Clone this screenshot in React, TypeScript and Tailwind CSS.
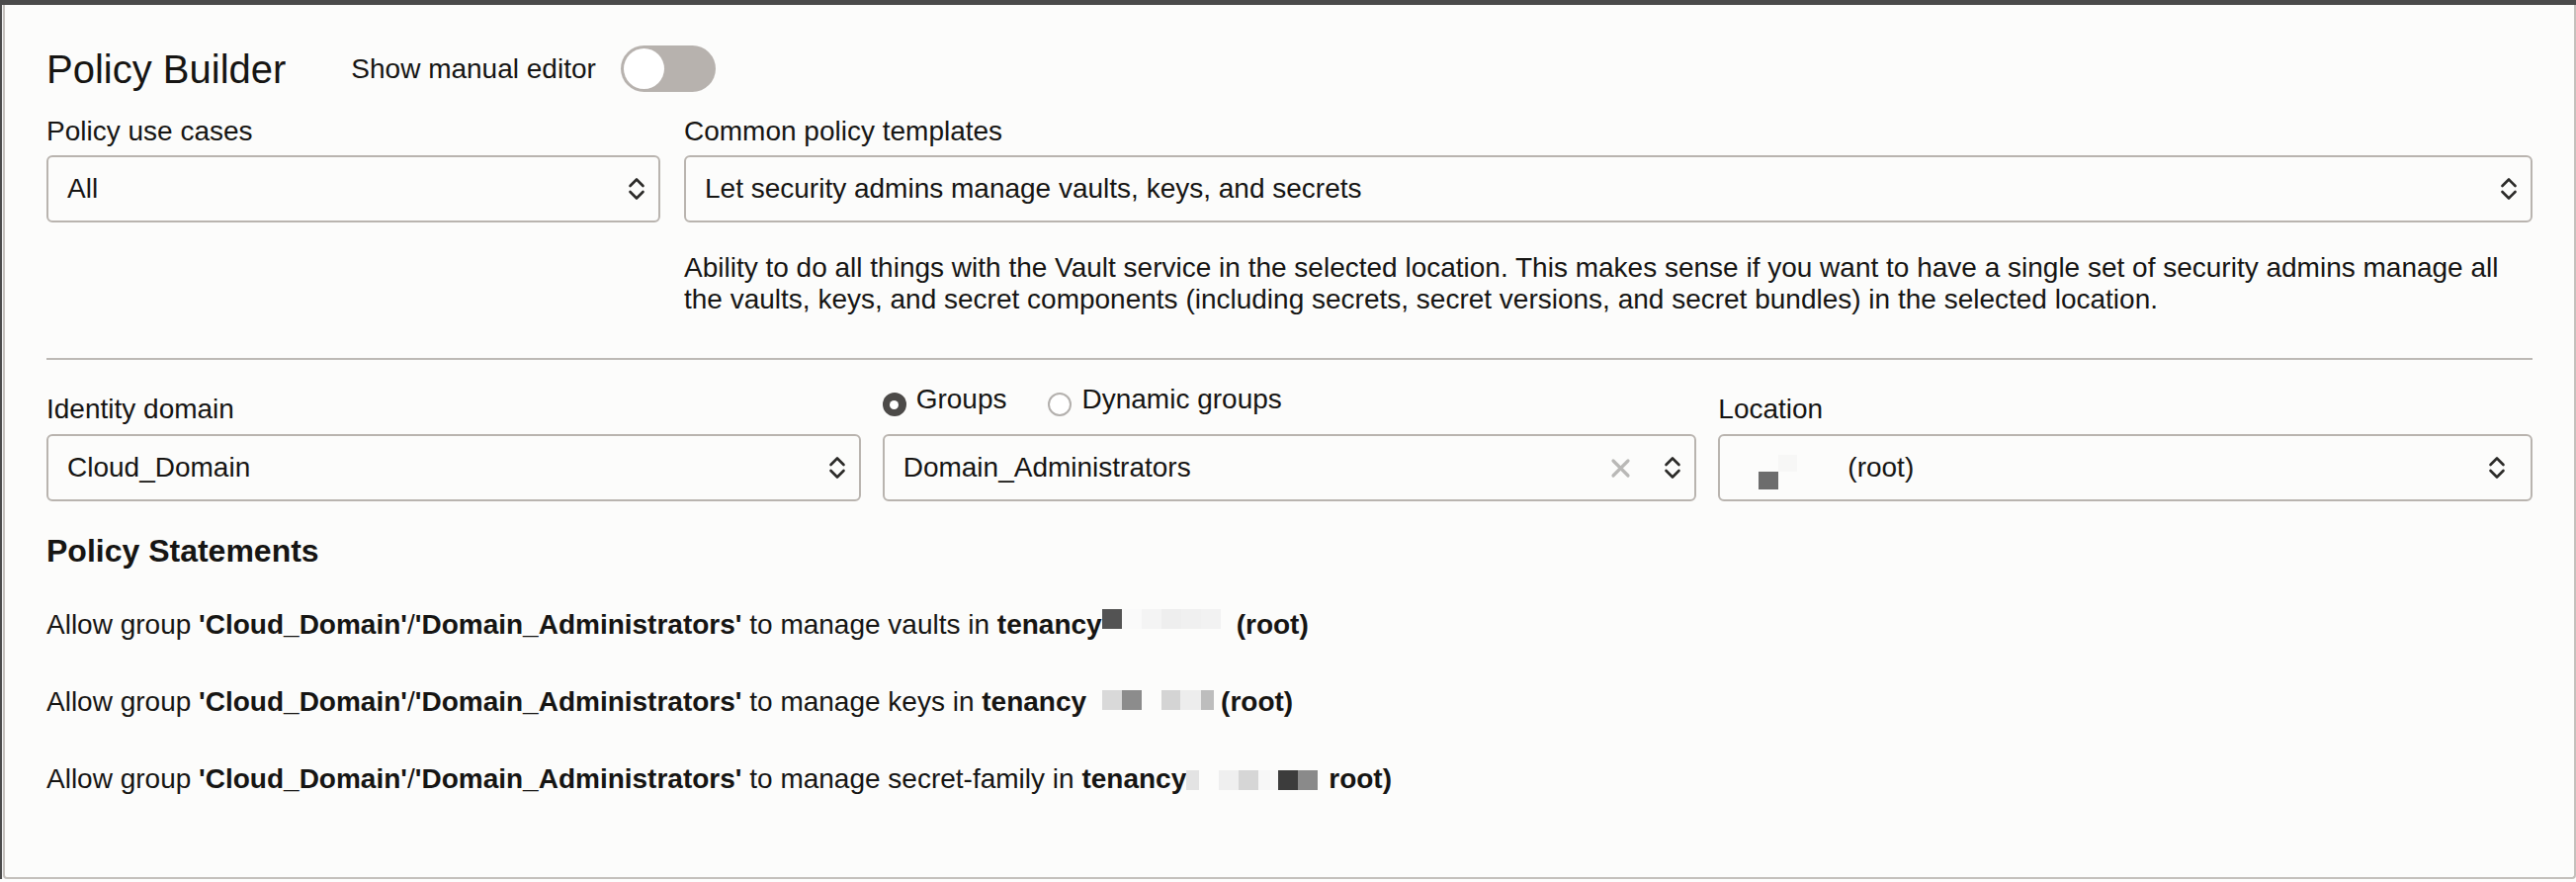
import React from 'react';

const TEXT = 'text-[28px] leading-[32px]';

function Chevrons(): JSX.Element {
  return (
    <svg width="18" height="28" viewBox="0 0 18 28" fill="none" className="shrink-0">
      <path d="M2.5 11 L9 4.5 L15.5 11" stroke="#2b2a28" strokeWidth="2.6" strokeLinecap="round" strokeLinejoin="round" />
      <path d="M2.5 17 L9 23.5 L15.5 17" stroke="#2b2a28" strokeWidth="2.6" strokeLinecap="round" strokeLinejoin="round" />
    </svg>
  );
}

function ClearIcon(): JSX.Element {
  return (
    <svg width="21" height="21" viewBox="0 0 21 21" fill="none" className="mr-[33px] shrink-0">
      <path d="M3 3 L18 18 M18 3 L3 18" stroke="#b9b8b6" strokeWidth="3.2" strokeLinecap="round" />
    </svg>
  );
}

function Select({
  children,
  clear,
  wide,
}: {
  children: React.ReactNode;
  clear?: boolean;
  wide?: boolean;
}): JSX.Element {
  return (
    <div
      className={
        wide
          ? 'flex h-[68px] items-center rounded-[6px] border-2 border-[#b9b4af] bg-[#fcfcfb] pl-[19px] pr-[25px]'
          : 'flex h-[68px] items-center rounded-[6px] border-2 border-[#b9b4af] bg-[#fcfcfb] pl-[19px] pr-[13px]'
      }
    >
      <div className={`flex flex-1 items-center ${TEXT}`}>{children}</div>
      {clear && <ClearIcon />}
      <Chevrons />
    </div>
  );
}

function Radio({ label, checked }: { label: string; checked?: boolean }): JSX.Element {
  return (
    <div className="flex items-start">
      {checked ? (
        <span className="mt-[9px] flex h-[24px] w-[24px] items-center justify-center rounded-full bg-[#4c4a48]">
          <span className="h-[9px] w-[9px] rounded-full bg-white" />
        </span>
      ) : (
        <span className="mt-[9px] h-[24px] w-[24px] rounded-full border-2 border-[#b3b0ad] bg-white" />
      )}
      <span className={`ml-[10px] ${TEXT}`}>{label}</span>
    </div>
  );
}

type Block = [string, string];

function Redact({ blocks, align }: { blocks: Block[]; align: string }): JSX.Element {
  return (
    <>
      {blocks.map(([w, c], i) => (
        <span key={i} className={`inline-block h-[20px] ${align} ${w} ${c}`} />
      ))}
    </>
  );
}

function Statement({
  what,
  blocks,
  align,
  root,
  rootGap,
}: {
  what: string;
  blocks: Block[];
  align: string;
  root: string;
  rootGap: string;
}): JSX.Element {
  return (
    <p className={`whitespace-nowrap ${TEXT}`}>
      Allow group <b>'Cloud_Domain'</b>/<b>'Domain_Administrators'</b> to manage {what} in{' '}
      <b>tenancy</b>
      <Redact blocks={blocks} align={align} />
      <b className={`inline-block ${rootGap}`}>{root}</b>
    </p>
  );
}

export default function App(): JSX.Element {
  return (
    <div className="flex h-[892px] w-[2606px] flex-col bg-[#fdfdfd] font-['Liberation_Sans',Arial,sans-serif] text-[#161513]">
      <div className="h-[5px] shrink-0 bg-[#4b4b4b]" />
      <div className="flex h-[884px] shrink-0">
        <div className="w-[2px] bg-[#4b4b4b]" />
        <div className="w-[1px] bg-[#f2f2f2]" />
        <div className="flex-1 rounded-b-[4px] border-x-2 border-b-2 border-[#c4c0bc] bg-[#fcfcfb] px-[42px] pt-[41px]">
          <header className="flex h-[47px] items-center">
            <h1 className="text-[40px] font-normal leading-[40px]">Policy Builder</h1>
            <span className={`ml-[66px] ${TEXT}`}>Show manual editor</span>
            <span className="ml-[25px] flex h-[47px] w-[96px] items-center rounded-full bg-[#b7b2ae] px-[3px]">
              <span className="h-[41px] w-[41px] rounded-full bg-white" />
            </span>
          </header>

          <div className="mt-[24px] flex gap-[24px]">
            <div className="flex w-[621px] shrink-0 flex-col">
              <label className={`mb-[8px] ${TEXT}`}>Policy use cases</label>
              <Select>All</Select>
            </div>
            <div className="flex flex-1 flex-col">
              <label className={`mb-[8px] ${TEXT}`}>Common policy templates</label>
              <Select>Let security admins manage vaults, keys, and secrets</Select>
              <p className={`mt-[30px] whitespace-nowrap ${TEXT}`}>
                Ability to do all things with the Vault service in the selected location. This makes sense if you
                want to have a single set of security admins manage all
                <br />
                the vaults, keys, and secret components (including secrets, secret versions, and secret bundles) in
                the selected location.
              </p>
            </div>
          </div>

          <div className="mt-[43px] h-[2px] bg-[#bdb9b5]" />

          <div className="mt-[24px] grid grid-cols-3 items-end gap-x-[22px]">
            <div className="flex flex-col">
              <label className={`mb-[9px] ${TEXT}`}>Identity domain</label>
              <Select>Cloud_Domain</Select>
            </div>
            <div className="flex flex-col">
              <div className="mb-[19px] flex h-[32px] gap-[42px]">
                <Radio label="Groups" checked />
                <Radio label="Dynamic groups" />
              </div>
              <Select clear>Domain_Administrators</Select>
            </div>
            <div className="flex flex-col">
              <label className={`mb-[9px] ${TEXT}`}>Location</label>
              <Select wide>
                <span className="ml-[20px] mt-[9px] flex h-[35px] items-end">
                  <span className="h-[18px] w-[20px] bg-[#6d6d6d]" />
                  <span className="mb-[18px] h-[17px] w-[19px] bg-[#f7f7f6]" />
                </span>
                <span className="ml-[51px]">(root)</span>
              </Select>
            </div>
          </div>

          <h2 className="mt-[32px] text-[32px] font-bold leading-[36px]">Policy Statements</h2>

          <div className="mt-[41px] flex flex-col gap-[46px]">
            <Statement
              what="vaults"
              align="align-[5px]"
              blocks={[
                ['w-[20px]', 'bg-[#535353]'],
                ['w-[20px]', 'bg-[#fafafa]'],
                ['w-[20px]', 'bg-[#f4f4f4]'],
                ['w-[20px]', 'bg-[#eeeeee]'],
                ['w-[20px]', 'bg-[#f0f0f0]'],
                ['w-[20px]', 'bg-[#f2f2f2]'],
              ]}
              root="(root)"
              rootGap="ml-[16px]"
            />
            <Statement
              what="keys"
              align="align-[1px]"
              blocks={[
                ['w-[16px]', 'bg-transparent'],
                ['w-[20px]', 'bg-[#d9d9d9]'],
                ['w-[20px]', 'bg-[#8c8c8c]'],
                ['w-[20px]', 'bg-transparent'],
                ['w-[19px]', 'bg-[#d4d4d4]'],
                ['w-[21px]', 'bg-[#ededed]'],
                ['w-[13px]', 'bg-[#bdbdbd]'],
              ]}
              root="(root)"
              rootGap="ml-[7px]"
            />
            <Statement
              what="secret-family"
              align="align-[-2px]"
              blocks={[
                ['w-[13px]', 'bg-[#e3e3e3]'],
                ['w-[20px]', 'bg-transparent'],
                ['w-[20px]', 'bg-[#efefef]'],
                ['w-[20px]', 'bg-[#d6d6d6]'],
                ['w-[20px]', 'bg-[#f7f7f7]'],
                ['w-[20px]', 'bg-[#3c3c3c]'],
                ['w-[20px]', 'bg-[#8a8a8a]'],
              ]}
              root="root)"
              rootGap="ml-[11px]"
            />
          </div>
        </div>
      </div>
    </div>
  );
}
